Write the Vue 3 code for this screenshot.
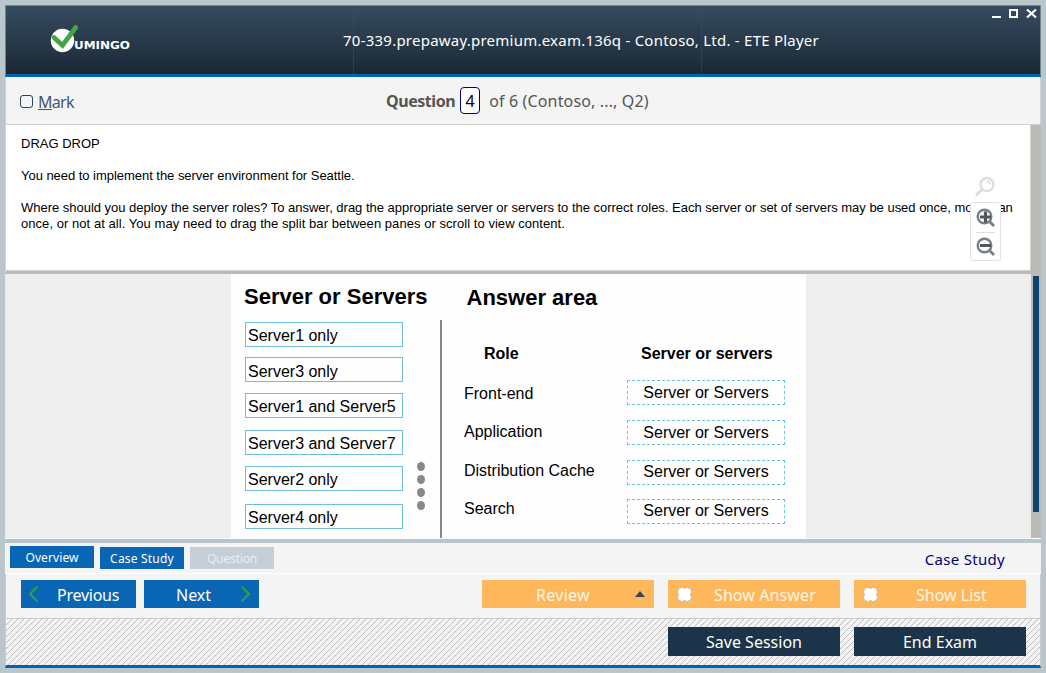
<script setup>
const servers = ['Server1 only', 'Server3 only', 'Server1 and Server5', 'Server3 and Server7', 'Server2 only', 'Server4 only']
const roles = ['Front-end', 'Application', 'Distribution Cache', 'Search']
</script>

<template>
  <div class="window">
    <header class="titlebar">
      <svg class="logo" width="86" height="34" viewBox="0 0 86 34">
        <circle cx="12.500" cy="17.500" r="11.700" fill="#fff" />
        <path d="M4 14.500 L12.500 22.500 L25.700 4.500" fill="none" stroke="#43a547" stroke-width="4.800" stroke-linecap="round" />
        <text x="24" y="26" textLength="56" lengthAdjust="spacingAndGlyphs" class="logo-text">UMINGO</text>
      </svg>
      <h1 class="title"><span>70-339.prepaway.premium.exam.136q - Contoso, Ltd. - ETE Player</span></h1>
      <svg class="controls" width="46" height="12" viewBox="0 0 46 12">
        <path d="M0 8h9v2h-9z" fill="#fff" />
        <rect x="18" y="2" width="7" height="7" fill="none" stroke="#fffdf5" stroke-width="2" />
        <path d="M35 1.500l9 8M44 1.500l-9 8" stroke="#fff" stroke-width="2.200" />
      </svg>
    </header>

    <div class="toolbar">
      <label class="mark"><span class="box"></span><span class="mark-text"><u>M</u>ark</span></label>
      <div class="counter"><b>Question</b><span class="num">4</span><span class="of">of 6 (Contoso, ..., Q2)</span></div>
    </div>

    <section class="prompt">
      <div class="copy">
        <p class="l1">DRAG DROP</p>
        <p class="l2">You need to implement the server environment for Seattle.</p>
        <p class="l3">Where should you deploy the server roles? To answer, drag the appropriate server or servers to the correct roles. Each server or set of servers may be used once, more than</p>
        <p class="l4">once, or not at all. You may need to drag the split bar between panes or scroll to view content.</p>
      </div>
      <svg class="search" width="22" height="22" viewBox="0 0 22 22">
        <circle cx="13" cy="8.500" r="6.500" fill="#fff" stroke="#dedede" stroke-width="2.400" />
        <path d="M13 5q3 .5 3.500 3.500" fill="none" stroke="#dedede" stroke-width="1.500" />
        <path d="M8 13.500L2.800 18.500" stroke="#dedede" stroke-width="3" stroke-linecap="round" />
      </svg>
      <div class="zoombox">
        <svg width="20" height="20" viewBox="0 0 20 20">
          <circle cx="8.500" cy="8.500" r="6.800" fill="#fff" stroke="#74808b" stroke-width="2.400" />
          <path d="M13 13l5 5" stroke="#74808b" stroke-width="2.800" />
          <path d="M4 9h11M9.500 3.500v11" stroke="#555" stroke-width="3.200" />
        </svg>
        <i></i>
        <svg width="20" height="20" viewBox="0 0 20 20">
          <circle cx="8.500" cy="8.500" r="6.800" fill="#fff" stroke="#74808b" stroke-width="2.400" />
          <path d="M13 13l5 5" stroke="#74808b" stroke-width="2.800" />
          <path d="M4 8.500h11" stroke="#555" stroke-width="3" />
        </svg>
      </div>
      <div class="track"></div>
    </section>

    <section class="work">
      <div class="sheet">
        <div class="source">
          <h2 class="h-source">Server or Servers</h2>
          <div class="chips">
            <div v-for="s in servers" :key="s" class="chip"><span>{{ s }}</span></div>
          </div>
        </div>
        <div class="dots"><i></i><i></i><i></i><i></i></div>
        <div class="rule"></div>
        <div class="answer">
          <h2 class="h-answer">Answer area</h2>
          <div class="cols">
            <div class="roles">
              <h3>Role</h3>
              <div v-for="r in roles" :key="r" class="role"><span>{{ r }}</span></div>
            </div>
            <div class="slots">
              <h3>Server or servers</h3>
              <div class="slot-list">
                <div v-for="r in roles" :key="r" class="slot"><span>Server or Servers</span></div>
              </div>
            </div>
          </div>
        </div>
      </div>
      <div class="track"><div class="thumb"></div></div>
    </section>

    <nav class="tabs">
      <button class="tab t1"><span>Overview</span></button>
      <button class="tab t2"><span>Case Study</span></button>
      <button class="tab t3"><span>Question</span></button>
      <span class="case">Case Study</span>
    </nav>

    <div class="actions">
      <button class="blue prev">
        <svg width="12" height="18" viewBox="0 0 12 18"><path d="M9.500 1.500L2 9l7.500 7.500" /></svg><span>Previous</span>
      </button>
      <button class="blue next">
        <span>Next</span><svg width="12" height="18" viewBox="0 0 12 18"><path d="M2.500 1.500L10 9l-7.500 7.500" /></svg>
      </button>
      <button class="amber review"><span>Review</span><i class="up"></i></button>
      <button class="amber"><i class="check"></i><span class="sa">Show Answer</span></button>
      <button class="amber"><i class="check"></i><span class="sl">Show List</span></button>
    </div>

    <footer class="foot">
      <svg class="hatch" width="1034" height="46">
        <defs><pattern id="hatch" width="6" height="6" patternUnits="userSpaceOnUse"><path d="M-1 7L7 -1M-1 1L1 -1M5 7L7 5" stroke="#bababa" stroke-width="1" /></pattern></defs>
        <rect width="1034" height="46" fill="url(#hatch)" />
      </svg>
      <button class="navy"><span>Save Session</span></button>
      <button class="navy"><span>End Exam</span></button>
    </footer>
  </div>
</template>

<style>
body { background: #b9c6cc; }
</style>

<style scoped>
* { box-sizing: border-box; margin: 0; }
.window { width: 1046px; height: 673px; padding: 5px 5px 0; background: #b9c6cc; font-family: "Noto Sans", "Open Sans", sans-serif; overflow: hidden; white-space: nowrap; }
.window span { flex: none; }
button { border: 0; padding: 0; border-radius: 0; font-family: "Noto Sans", sans-serif; }
.titlebar { height: 72px; border: 1px solid #75868b; border-bottom: 3px solid #0062b3; background: linear-gradient(#364c5f, #1a2835); color: #fff; display: flex; position: relative; }
.titlebar::before, .titlebar::after { content: ""; position: absolute; top: 1px; bottom: 0; left: 347px; width: 0; border-left: 1px dotted #34479a; }
.titlebar::after { left: 695px; }
.logo { position: absolute; left: 44px; top: 17px; }
.logo-text { font: bold 10.500px "DejaVu Sans", sans-serif; fill: #fff; }
.title { width: 100%; padding-left: 337px; font-size: 15px; line-height: 68px; font-weight: 400; position: relative; }
.title span { letter-spacing: .235px; }
.controls { position: absolute; right: 2px; top: 2px; }
.toolbar { height: 48px; border: 1px solid #d2d2d2; border-top: 0; background: #f4f4f4; display: flex; align-items: center; color: #555; }
.mark { display: flex; align-items: center; margin-left: 14px; color: #43566a; font-size: 16px; height: 40px; width: 366px; padding-top: 2px; }
.mark-text { letter-spacing: -.7px; }
.box { width: 13px; height: 13px; border: 1px solid #2d4358; border-radius: 3px; margin-right: 5px; }
.counter { display: flex; align-items: center; font-size: 16px; }
.counter b { letter-spacing: -.45px; }
.of { letter-spacing: .15px; }
.num { width: 20px; height: 27px; border: 1px solid #000080; border-radius: 4px; background: #fff; color: #000; text-align: center; line-height: 26px; margin: 0 9px 0 5px; }
.prompt { height: 149px; position: relative; display: flex; justify-content: space-between; background: #fff; border-left: 1px solid #d2d2d2; border-bottom: 3px solid #bbbab6; }
.copy { flex: 1; width: 0; padding: 11px 0 0 15px; color: #000; font: 13px/16px "Liberation Sans", Arial, sans-serif; box-shadow: inset -1px -1px #d2d2d2; }
.l1, .l2 { margin-bottom: 16px; }
.l2 { letter-spacing: -.035px; }
.l3 { letter-spacing: -.017px; }
.l4 { letter-spacing: .05px; }
.search { position: absolute; left: 968px; top: 51px; }
.zoombox { position: absolute; left: 964px; top: 77px; width: 31px; height: 59px; border: 1px solid #e1e1e1; border-radius: 3px; background: #fff; display: flex; flex-direction: column; align-items: center; justify-content: space-between; padding: 5px 0 3px; }
.zoombox i { width: 19px; height: 1px; background: #ddd; margin-top: -1px; }
.track { width: 10px; background: #bbbab6; padding: 2px 2px 0; flex: none; }
.prompt .track { height: 149px; }
.thumb { height: 236px; background: #0b426f; }
.work { height: 265px; background: #eee; display: flex; justify-content: space-between; padding-left: 226px; border-bottom: 1px solid #fff; color: #000; font-family: "Liberation Sans", Arial, sans-serif; font-size: 16px; }
.sheet { width: 575px; height: 264px; background: #fefefe; display: flex; }
.source { width: 172px; padding-left: 14px; }
h2 { font-size: 22px; line-height: 26px; }
.h-source { margin: 10px 0 12px -1px; }
.chips { display: grid; grid-template-rows: 35px 36px 37px 36px 38px 25px; }
.chip { width: 158px; height: 25px; border: 1px solid #71bedb; padding-left: 2px; line-height: 26px; }
.chip:nth-child(2) { line-height: 27px; }
.dots { width: 37px; padding: 188px 0 0 14px; display: flex; flex-direction: column; gap: 4px; }
.dots i { width: 8px; height: 9px; border-radius: 50%; background: #888; flex: none; }
.rule { width: 2px; height: 218px; margin-top: 46px; background: #868686; }
.answer { flex: 1; padding-left: 22px; }
.h-answer { margin: 11px 0 0 2.500px; }
.cols { display: flex; }
h3 { font-size: 16px; line-height: 20px; }
.roles { width: 163px; padding-top: 33px; }
.roles h3 { padding-left: 20px; margin-bottom: 11px; }
.role { height: 38.300px; line-height: 38px; }
.slots { width: 158px; padding-top: 33px; }
.slots h3 { padding-left: 14px; margin-bottom: 16px; }
.slot-list { display: grid; grid-template-rows: 40px 40px 39px 25px; }
.slot { height: 25px; line-height: 24px; border: 1px dashed #6fc6da; text-align: center; }
.slot:nth-child(n+3) { line-height: 22px; }
.tabs { height: 35px; border-top: 4px solid #b9c5cb; border-bottom: 1px solid #fff; background: #f4f4f4; display: flex; gap: 6px; padding: 3px 36px 0 5px; }
.tab { width: 84px; height: 22px; background: #0866b4; color: #fff; font-size: 12px; line-height: 22px; }
.t1 { line-height: 24px; letter-spacing: .1px; }
.t2, .t3 { margin-top: 1px; line-height: 23px; }
.t2 { letter-spacing: .2px; }
.t3 { background: #c3ced6; color: #e9eef2; letter-spacing: -.15px; }
.case { margin-left: auto; color: #000080; font-size: 15px; line-height: 27px; letter-spacing: .3px; }
.actions { height: 45px; background: #f4f4f4; border: 1px solid #ccc; border-top: 0; display: flex; padding: 6px 14px 0 15px; }
.actions button { height: 28px; line-height: 28px; color: #fff; font-size: 16px; display: flex; align-items: center; }
.actions button span { padding-top: 2px; }
.blue { width: 115px; background: #0866b4; margin-right: 8px; }
.blue path { fill: none; stroke: #35a047; stroke-width: 2; }
.prev svg { margin-left: 7px; }
.prev span { margin-left: 17px; letter-spacing: -.25px; }
.next span { margin-left: 32px; }
.next svg { margin-left: auto; margin-right: 8px; }
.actions .amber { width: 172px; background: #ffb75b; margin-left: 14px; color: #fff6e4; }
.actions .review { margin-left: auto; }
.review span { margin-left: 54px; letter-spacing: .3px; }
.up { margin-left: auto; margin-right: 9px; border: 5px solid transparent; border-top: 0; border-bottom: 6px solid #30475c; }
.check { width: 13px; height: 13px; border: 1px dashed #d6cebf; background: #fff; margin-left: 10px; }
.sa { margin-left: 23px; letter-spacing: .1px; }
.sl { margin-left: 39px; }
.foot { position: relative; height: 49px; border: 1px solid #ccc; border-top: 0; border-bottom: 3px solid #0062b3; background: #f4f4f4; display: flex; justify-content: flex-end; gap: 14px; padding: 8px 14px 0; }
.hatch { position: absolute; left: 0; top: 0; }
.navy { position: relative; width: 172px; height: 29px; background: #1b3449; color: #fff; font-size: 16px; line-height: 31px; }
</style>
